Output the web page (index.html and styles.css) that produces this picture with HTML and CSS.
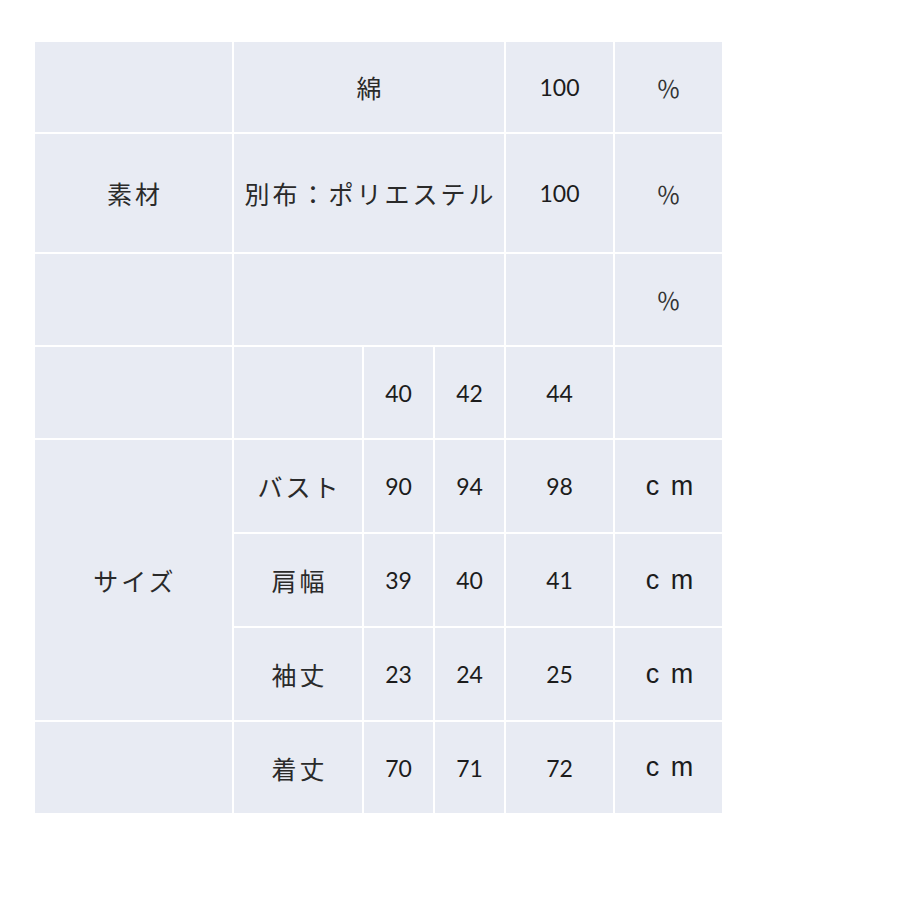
FILE: index.html
```html
<!DOCTYPE html>
<html lang="ja">
<head>
<meta charset="utf-8">
<title>素材・サイズ</title>
<link rel="stylesheet" href="styles.css">
</head>
<body>
<div class="sheet">
  <div class="cell"></div>
  <div class="cell span3 jp">綿</div>
  <div class="cell num">100</div>
  <div class="cell pct">％</div>

  <div class="cell jp">素材</div>
  <div class="cell span3 jp">別布：ポリエステル</div>
  <div class="cell num">100</div>
  <div class="cell pct">％</div>

  <div class="cell"></div>
  <div class="cell span3"></div>
  <div class="cell"></div>
  <div class="cell pct">％</div>

  <div class="cell"></div>
  <div class="cell"></div>
  <div class="cell num">40</div>
  <div class="cell num">42</div>
  <div class="cell num">44</div>
  <div class="cell"></div>

  <div class="cell jp rows3">サイズ</div>
  <div class="cell jp">バスト</div>
  <div class="cell num">90</div>
  <div class="cell num">94</div>
  <div class="cell num">98</div>
  <div class="cell unit">c m</div>

  <div class="cell jp">肩幅</div>
  <div class="cell num">39</div>
  <div class="cell num">40</div>
  <div class="cell num">41</div>
  <div class="cell unit">c m</div>

  <div class="cell jp">袖丈</div>
  <div class="cell num">23</div>
  <div class="cell num">24</div>
  <div class="cell num">25</div>
  <div class="cell unit">c m</div>

  <div class="cell"></div>
  <div class="cell jp">着丈</div>
  <div class="cell num">70</div>
  <div class="cell num">71</div>
  <div class="cell num">72</div>
  <div class="cell unit">c m</div>
</div>
</body>
</html>
```

FILE: styles.css
```css
html, body {
  margin: 0;
  padding: 0;
  background: #ffffff;
}

body {
  padding: 42px 0 0 35px;
  font-family: "Noto Sans CJK JP", "Noto Sans", sans-serif;
  color: #222222;
}

.sheet {
  display: grid;
  grid-template-columns: 197px 128px 69px 69px 107px 107px;
  grid-template-rows: 90px 118px 91px 91px 92px 92px 92px 91px;
  gap: 2px;
  width: 687px;
  background: #ffffff;
}

.cell {
  background: #e8ebf3;
  display: flex;
  align-items: center;
  justify-content: center;
}

.span3 {
  grid-column: span 3;
}

.rows3 {
  grid-row: span 3;
}

.jp {
  font-family: "Noto Sans CJK JP", sans-serif;
  font-size: 25px;
  letter-spacing: 3px;
  padding-left: 3px;
  color: #2a2a2a;
}

.num {
  font-family: Lato, "Open Sans", sans-serif;
  font-size: 23px;
  color: #1c1c1c;
}

.pct {
  font-family: "Noto Sans CJK JP", sans-serif;
  font-size: 24px;
  color: #333333;
}

.unit {
  font-family: "Liberation Sans", Arial, sans-serif;
  font-size: 27px;
  word-spacing: 4px;
  padding-left: 2px;
  color: #1c1c1c;
}
```
